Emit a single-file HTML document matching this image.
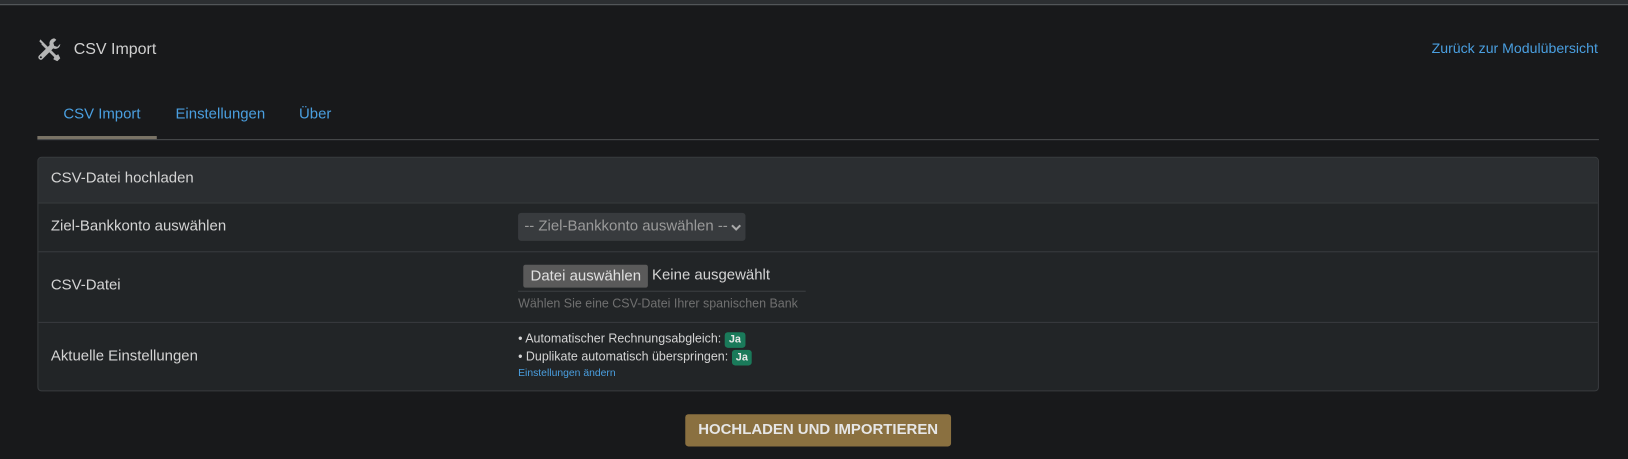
<!DOCTYPE html>
<html><head><meta charset="utf-8"><style>
*{box-sizing:border-box;margin:0;padding:0}
body{width:1628px;height:459px;background:#18191b;font-family:"Liberation Sans",sans-serif;color:#d4d4d4;position:relative;overflow:hidden}
#wrap{position:absolute;left:0;top:0;width:1568px;height:442px;transform:scale(1.03827);transform-origin:0 0}
.topbar{position:absolute;left:0;top:0;width:1568px;height:5px;background:#2c2f32;border-bottom:1px solid #5a5d60}
.abs{position:absolute;white-space:nowrap}
a{color:#4a9fe0;text-decoration:none}
.card{position:absolute;left:36px;top:151px;width:1504px;height:226px;border:1px solid #383b3e;border-radius:4px;background:#222527;overflow:hidden}
.row{position:absolute;left:0;width:100%;border-top:1px solid #383b3e}
.lbl{position:absolute;left:12px;font-size:14.4px;color:#d4d4d4}
.badge{display:inline-block;background:#1a7a5a;color:#e8e8e8;font-size:10.5px;font-weight:bold;padding:2px 4px;border-radius:3px;line-height:11px}
</style></head><body>
<div id="wrap">
<div class="topbar"></div>
<svg class="abs" style="left:36px;top:36px" width="23" height="23" viewBox="0 0 24 24" fill="#b5b5b5">
<path d="M3 2l5 5-1.5 1.5L2 4z M6 5l13 13 2 -1 2 4-3 3-4-2 1-2L4 7z"/>
<path d="M17 1a5 5 0 0 0-4.6 6.6L1.5 18.5a2.5 2.5 0 0 0 3.5 3.5L15.9 11.1A5 5 0 0 0 23 6.5l-3 3-3-1-1-3 3-3A5 5 0 0 0 17 1z"/>
<circle cx="3.5" cy="20" r="1" fill="#18191b"/>
</svg>
<div class="abs" style="left:71px;top:39px;font-size:15.4px;color:#d0d0d0">CSV Import</div>
<a class="abs" style="right:29px;top:39px;font-size:13.6px">Zurück zur Modulübersicht</a>
<div class="abs" style="left:36px;top:134px;width:1504px;height:1px;background:#4a4d50"></div>
<div class="abs" style="left:36px;top:131px;width:115px;height:3px;background:#7a7366"></div>
<a class="abs" style="left:61px;top:102px;font-size:14.4px">CSV Import</a>
<a class="abs" style="left:169px;top:102px;font-size:14.4px">Einstellungen</a>
<a class="abs" style="left:288px;top:102px;font-size:14.4px">Über</a>
<div class="card">
 <div style="position:absolute;left:0;top:0;width:100%;height:43px;background:#2b2e31"></div>
 <div class="lbl" style="top:12px">CSV-Datei hochladen</div>
 <div class="row" style="top:43px;height:47px">
  <div class="lbl" style="top:14px">Ziel-Bankkonto auswählen</div>
  <div class="abs" style="left:462px;top:9px;width:219px;height:27px;background:#383b3e;border-radius:3px;font-size:14.4px;color:#9a9a9a;padding:5px 6px">-- Ziel-Bankkonto auswählen --
   <svg style="position:absolute;right:4px;top:11px" width="10" height="7" viewBox="0 0 10 7"><path d="M1 1l4 4 4-4" stroke="#aaa" stroke-width="2" fill="none"/></svg></div>
 </div>
 <div class="row" style="top:90px;height:68px">
  <div class="lbl" style="top:24px">CSV-Datei</div>
  <div class="abs" style="left:467px;top:12px;width:120px;height:22px;background:#5a5a5a;border-radius:2px;font-size:14.4px;color:#e0e0e0;padding:3px 7px">Datei auswählen</div>
  <div class="abs" style="left:591px;top:14px;font-size:14.4px;color:#d4d4d4">Keine ausgewählt</div>
  <div class="abs" style="left:462px;top:37px;width:277px;height:1px;background:#3c3f42"></div>
  <div class="abs" style="left:462px;top:42px;font-size:12px;color:#707070">Wählen Sie eine CSV-Datei Ihrer spanischen Bank</div>
 </div>
 <div class="row" style="top:158px;height:68px">
  <div class="lbl" style="top:24px">Aktuelle Einstellungen</div>
  <div class="abs" style="left:462px;top:8px;font-size:12px;color:#d4d4d4">• Automatischer Rechnungsabgleich: <span class="badge">Ja</span></div>
  <div class="abs" style="left:462px;top:25px;font-size:12px;color:#d4d4d4">• Duplikate automatisch überspringen: <span class="badge">Ja</span></div>
  <a class="abs" style="left:462px;top:43px;font-size:10px">Einstellungen ändern</a>
 </div>
</div>
<div class="abs" style="left:660px;top:399px;width:256px;height:31px;background:#8a7040;border-radius:3px;font-size:14.4px;font-weight:bold;color:#e6e6e6;text-align:center;line-height:31px">HOCHLADEN UND IMPORTIEREN</div>
</div>
</body></html>
